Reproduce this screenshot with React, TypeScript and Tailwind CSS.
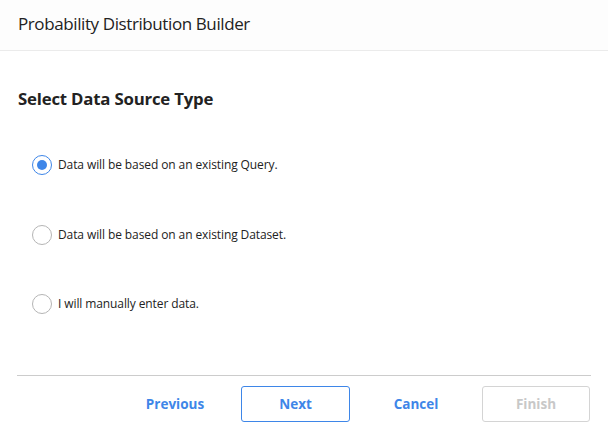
import React from "react";

const font = { fontFamily: '"Open Sans", "Noto Sans", sans-serif' };

function Radio({ checked, label }: { checked?: boolean; label: string }) {
  return (
    <label className="flex items-center gap-[6px] h-[20px] text-[12px] text-[#222]">
      <span
        className={
          checked
            ? "flex items-center justify-center w-[20px] h-[20px] rounded-full border border-[#3e86e8] bg-white"
            : "flex items-center justify-center w-[20px] h-[20px] rounded-full border border-[#b5b5b5] bg-white"
        }
      >
        {checked && <span className="w-[10px] h-[10px] rounded-full bg-[#3e86e8]" />}
      </span>
      <span className="tracking-[-0.1px]">{label}</span>
    </label>
  );
}

export default function App() {
  return (
    <div className="w-[608px] h-[431px] bg-white flex flex-col" style={font}>
      <div className="h-[51px] bg-[#fdfdfd] border-b border-[#ebebeb] flex items-center px-[18px]">
        <h1 className="text-[17px] text-[#222] tracking-[-0.4px] -mt-[3px]">Probability Distribution Builder</h1>
      </div>
      <div className="flex-1 flex flex-col px-[18px]">
        <h2 className="mt-[38px] text-[16.8px] font-bold text-[#222] tracking-[-0.2px] leading-[20px]">
          Select Data Source Type
        </h2>
        <div className="mt-[46px] flex flex-col gap-[49.5px] pl-[14px]">
          <Radio checked label="Data will be based on an existing Query." />
          <Radio label="Data will be based on an existing Dataset." />
          <Radio label="I will manually enter data." />
        </div>
        <div className="mt-auto border-t border-[#cccccc] mx-[-1px]" />
        <div className="flex justify-end gap-[12px] pt-[10px] pb-[9px] text-[13.5px] font-bold">
          <button className="w-[108px] h-[36px] rounded-[3px] text-[#3e86e8]">Previous</button>
          <button className="w-[109px] h-[36px] rounded-[3px] border border-[#3e86e8] text-[#3e86e8]">Next</button>
          <button className="w-[108px] h-[36px] rounded-[3px] text-[#3e86e8]">Cancel</button>
          <button className="w-[108px] h-[36px] rounded-[3px] border border-[#d4d4d4] text-[#c8c8c8]">Finish</button>
        </div>
      </div>
    </div>
  );
}
